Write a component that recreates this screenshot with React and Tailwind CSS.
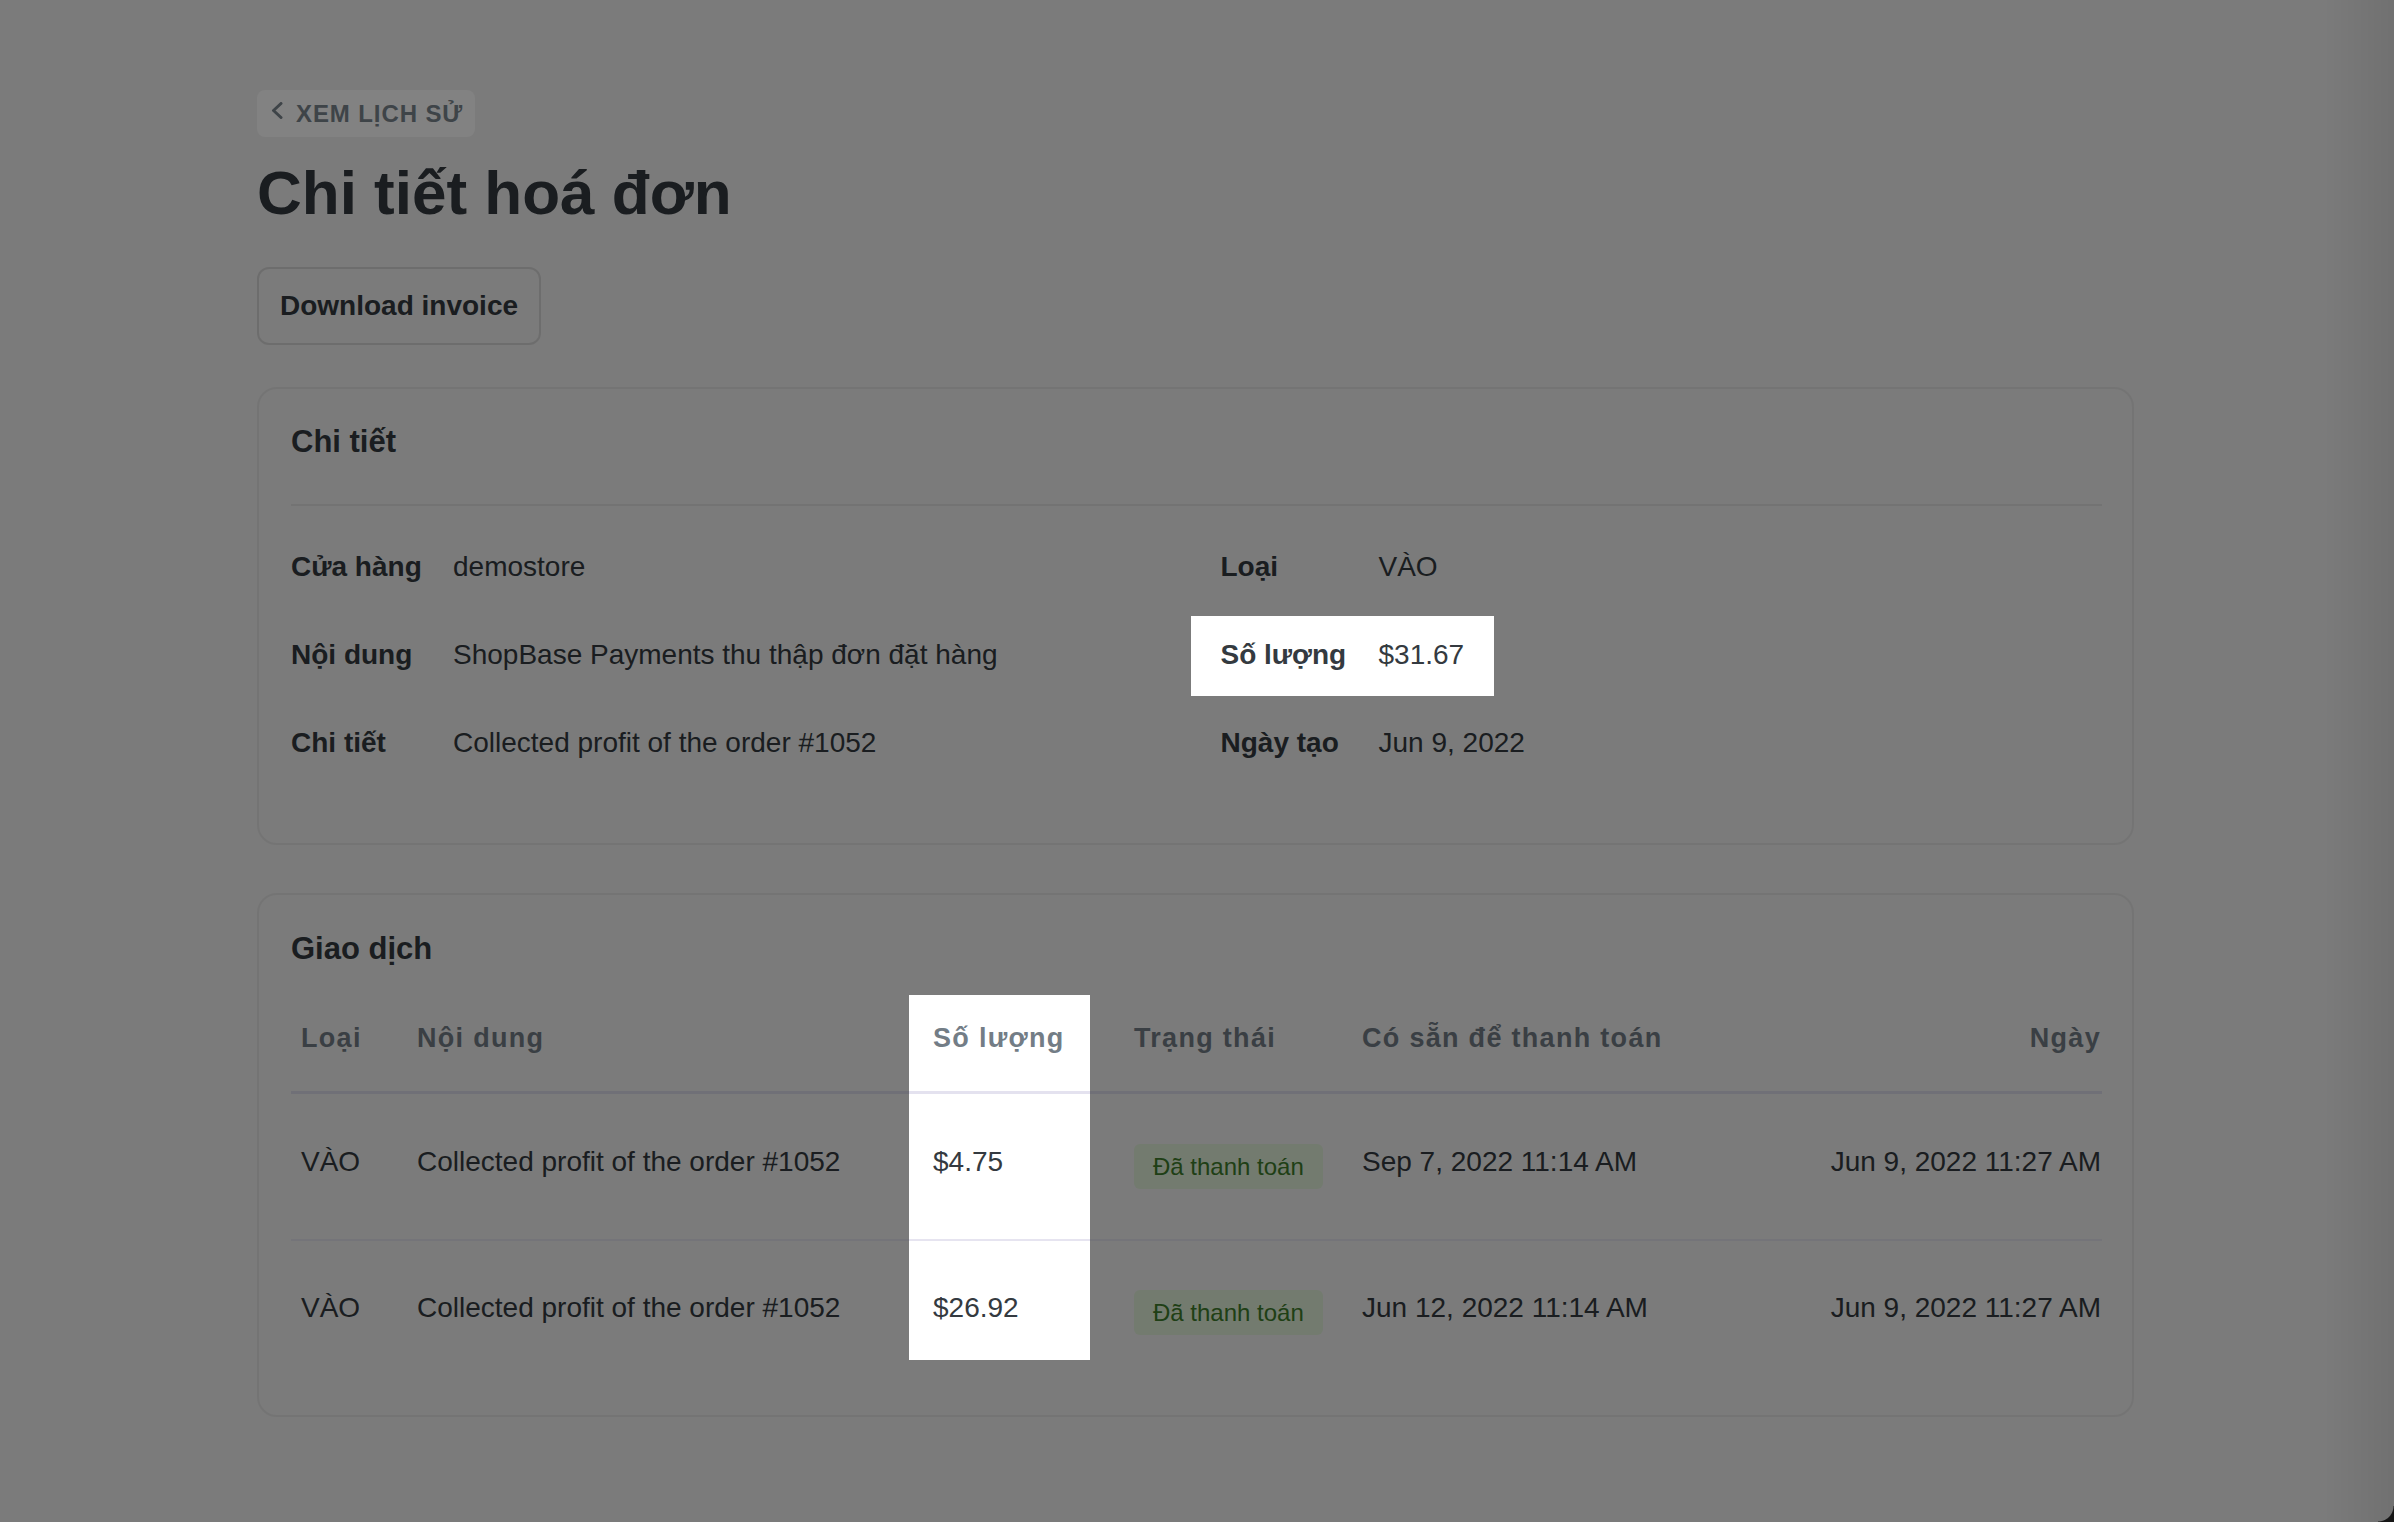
import React from "react";

function Chevron() {
  return (
    <svg width="12" height="17" viewBox="0 0 12 17" className="mb-[7px] shrink-0" fill="none">
      <polyline points="10,1.5 2.5,8.5 10,15.5" stroke="#7b858e" strokeWidth="3" strokeLinecap="round" strokeLinejoin="round" />
    </svg>
  );
}

function Row({ label, value, labelW, highlight }) {
  if (highlight) {
    return (
      <div className="relative z-50 flex bg-white -ml-[30px] px-[30px] -mt-[18px] pt-[18px] -mb-[20px] pb-[20px]">
        <div className={`${labelW} shrink-0 font-bold`}>{label}</div>
        <div>{value}</div>
      </div>
    );
  }
  return (
    <div className="flex">
      <div className={`${labelW} shrink-0 font-bold`}>{label}</div>
      <div>{value}</div>
    </div>
  );
}

function Badge() {
  return (
    <span className="inline-flex h-[45px] items-center rounded-[6px] bg-[#e1f2d9] px-[19px] text-[24px] leading-none text-[#3e7c2b]">
      Đã thanh toán
    </span>
  );
}

const rows = [
  { type: "VÀO", content: "Collected profit of the order #1052", amount: "$4.75", avail: "Sep 7, 2022 11:14 AM", date: "Jun 9, 2022 11:27 AM" },
  { type: "VÀO", content: "Collected profit of the order #1052", amount: "$26.92", avail: "Jun 12, 2022 11:14 AM", date: "Jun 9, 2022 11:27 AM" },
];

export default function App() {
  return (
    <div className="relative min-h-screen bg-[#f1f1f1] pl-[257px] pr-[260px] pt-[90px] pb-[60px] font-['Liberation_Sans',Arial,sans-serif] text-[#343a40]">
      {/* Back link */}
      <div className="flex h-[47px] w-fit items-center gap-[13px] rounded-[8px] bg-white pl-[14px] pr-[12px]">
        <Chevron />
        <span className="text-[24px] font-bold uppercase leading-none tracking-[0.9px] text-[#7b858e]">Xem lịch sử</span>
      </div>

      {/* Title */}
      <h1 className="mt-[18px] text-[62px] font-bold leading-[76px] text-[#343a40]">Chi tiết hoá đơn</h1>

      {/* Download button */}
      <button className="mt-[36px] flex h-[78px] items-center rounded-[12px] border-2 border-[#d6d6d6] px-[21px] text-[28px] font-bold leading-none text-[#343a40]">
        Download invoice
      </button>

      {/* Details card */}
      <section className="mt-[42px] rounded-[20px] border-2 border-[#e4e4e4] pl-[32px] pr-[30px] pt-[30px] pb-[79px]">
        <h2 className="text-[31px] font-bold leading-[46px]">Chi tiết</h2>
        <div className="mt-[39px] border-t-2 border-[#e2e2e2]" />
        <div className="mt-[40px] grid grid-cols-2 gap-x-[48px] text-[28px] leading-[42px]">
          <div className="flex flex-col items-start gap-y-[46px]">
            <Row label="Cửa hàng" value="demostore" labelW="w-[162px]" />
            <Row label="Nội dung" value="ShopBase Payments thu thập đơn đặt hàng" labelW="w-[162px]" />
            <Row label="Chi tiết" value="Collected profit of the order #1052" labelW="w-[162px]" />
          </div>
          <div className="flex flex-col items-start gap-y-[46px]">
            <Row label="Loại" value="VÀO" labelW="w-[158px]" />
            <Row label="Số lượng" value="$31.67" labelW="w-[158px]" highlight />
            <Row label="Ngày tạo" value="Jun 9, 2022" labelW="w-[158px]" />
          </div>
        </div>
      </section>

      {/* Transactions card */}
      <section className="mt-[48px] rounded-[20px] border-2 border-[#e4e4e4] pl-[32px] pr-[30px] pt-[31px] pb-[55px]">
        <h2 className="text-[31px] font-bold leading-[46px]">Giao dịch</h2>
        <table className="mt-[23px] w-full table-fixed border-separate border-spacing-0">
          <colgroup>
            <col className="w-[116px]" />
            <col className="w-[502px]" />
            <col className="w-[181px]" />
            <col className="w-[262px]" />
            <col className="w-[348px]" />
            <col className="w-[402px]" />
          </colgroup>
          <thead>
            <tr className="text-left align-top text-[27px] font-bold leading-[40px] tracking-[1.3px] text-[#737d86]">
              <th className="border-b-[3px] border-[#dcdbe9] pl-[10px] pt-[23px] pb-[33px] font-bold">Loại</th>
              <th className="border-b-[3px] border-[#dcdbe9] pl-[10px] pt-[23px] pb-[33px] font-bold">Nội dung</th>
              <th className="relative z-50 border-b-[3px] border-[#e4e2ef] bg-white pl-[24px] pt-[23px] pb-[33px] font-bold">Số lượng</th>
              <th className="border-b-[3px] border-[#dcdbe9] pl-[44px] pt-[23px] pb-[33px] font-bold">Trạng thái</th>
              <th className="border-b-[3px] border-[#dcdbe9] pl-[10px] pt-[23px] pb-[33px] font-bold">Có sẵn để thanh toán</th>
              <th className="border-b-[3px] border-[#dcdbe9] pr-[1px] pt-[23px] pb-[33px] text-right font-bold">Ngày</th>
            </tr>
          </thead>
          <tbody className="text-[28px] leading-[42px] text-[#343a40]">
            {rows.map((r, i) => {
              const last = i === rows.length - 1;
              const bd = last ? "" : "border-b-2 border-[#e4e3ee]";
              const pad = last ? "pt-[46px] pb-[31px]" : "pt-[47px] pb-[56px]";
              const badgePad = last ? "pt-[49px] pb-[25px]" : "pt-[50px] pb-[50px]";
              return (
                <tr key={i} className="align-top">
                  <td className={`${bd} ${pad} pl-[10px]`}>{r.type}</td>
                  <td className={`${bd} ${pad} pl-[10px]`}>{r.content}</td>
                  <td className={`relative z-50 bg-white ${last ? "" : "border-b-2 border-[#e6e4f0]"} ${pad} pl-[24px]`}>{r.amount}</td>
                  <td className={`${bd} ${badgePad} pl-[44px]`}><Badge /></td>
                  <td className={`${bd} ${pad} pl-[10px]`}>{r.avail}</td>
                  <td className={`${bd} ${pad} pr-[1px] text-right`}>{r.date}</td>
                </tr>
              );
            })}
          </tbody>
        </table>
      </section>

      {/* Tour overlay */}
      <div className="pointer-events-none fixed inset-0 z-40 bg-black/[0.49]" />
      <div className="pointer-events-none fixed right-0 top-0 z-[60] h-full w-[70px] bg-gradient-to-r from-transparent to-black/[0.08]" />
      <div className="pointer-events-none fixed bottom-0 right-0 z-[60] h-[16px] w-[16px] bg-[radial-gradient(circle_at_0_0,transparent_15px,#161616_16px)]" />
    </div>
  );
}
